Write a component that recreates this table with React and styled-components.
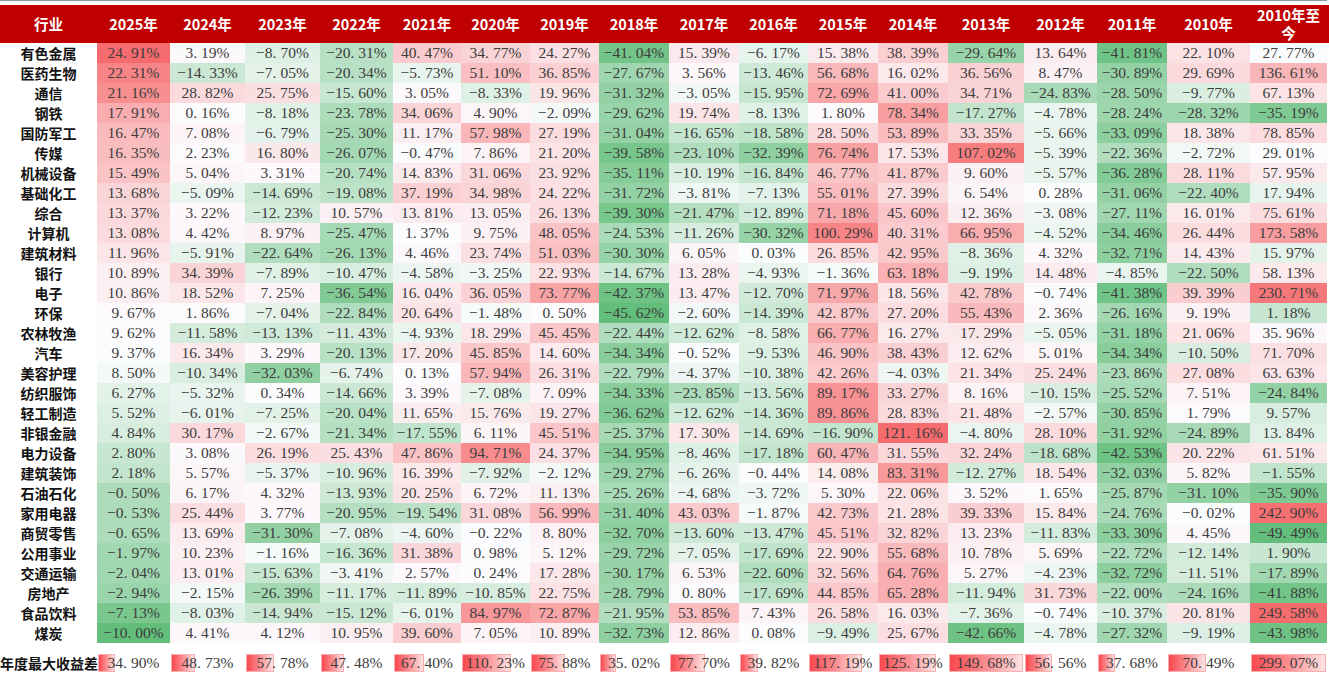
import React from "react";
import styled, { createGlobalStyle } from "styled-components";

const GlobalStyle = createGlobalStyle`
  html, body { margin: 0; padding: 0; background: #ffffff; }
  #root { width: 1329px; }
`;

const WIDTHS = [73, 75, 75, 73, 68, 69, 69, 70, 70, 69, 70, 70, 76, 73, 70, 83, 77];
const GRID = `97px ${WIDTHS.map((w) => w + "px").join(" ")}`;

const HEADERS = [
  "2025年", "2024年", "2023年", "2022年", "2021年", "2020年", "2019年", "2018年",
  "2017年", "2016年", "2015年", "2014年", "2013年", "2012年", "2011年", "2010年", "2010年至今",
];

const ROWS = [
  ["有色金属", [24.91, 3.19, -8.70, -20.31, 40.47, 34.77, 24.27, -41.04, 15.39, -6.17, 15.38, 38.39, -29.64, 13.64, -41.81, 22.10, 27.77]],
  ["医药生物", [22.31, -14.33, -7.05, -20.34, -5.73, 51.10, 36.85, -27.67, 3.56, -13.46, 56.68, 16.02, 36.56, 8.47, -30.89, 29.69, 136.61]],
  ["通信", [21.16, 28.82, 25.75, -15.60, 3.05, -8.33, 19.96, -31.32, -3.05, -15.95, 72.69, 41.00, 34.71, -24.83, -28.50, -9.77, 67.13]],
  ["钢铁", [17.91, 0.16, -8.18, -23.78, 34.06, 4.90, -2.09, -29.62, 19.74, -8.13, 1.80, 78.34, -17.27, -4.78, -28.24, -28.32, -35.19]],
  ["国防军工", [16.47, 7.08, -6.79, -25.30, 11.17, 57.98, 27.19, -31.04, -16.65, -18.58, 28.50, 53.89, 33.35, -5.66, -33.09, 18.38, 78.85]],
  ["传媒", [16.35, 2.23, 16.80, -26.07, -0.47, 7.86, 21.20, -39.58, -23.10, -32.39, 76.74, 17.53, 107.02, -5.39, -22.36, -2.72, 29.01]],
  ["机械设备", [15.49, 5.04, 3.31, -20.74, 14.83, 31.06, 23.92, -35.11, -10.19, -16.84, 46.77, 41.87, 9.60, -5.57, -36.28, 28.11, 57.95]],
  ["基础化工", [13.68, -5.09, -14.69, -19.08, 37.19, 34.98, 24.22, -31.72, -3.81, -7.13, 55.01, 27.39, 6.54, 0.28, -31.06, -22.40, 17.94]],
  ["综合", [13.37, 3.22, -12.23, 10.57, 13.81, 13.05, 26.13, -39.30, -21.47, -12.89, 71.18, 45.60, 12.36, -3.08, -27.11, 16.01, 75.61]],
  ["计算机", [13.08, 4.42, 8.97, -25.47, 1.37, 9.75, 48.05, -24.53, -11.26, -30.32, 100.29, 40.31, 66.95, -4.52, -34.46, 26.44, 173.58]],
  ["建筑材料", [11.96, -5.91, -22.64, -26.13, 4.46, 23.74, 51.03, -30.30, 6.05, 0.03, 26.85, 42.95, -8.36, 4.32, -32.71, 14.43, 15.97]],
  ["银行", [10.89, 34.39, -7.89, -10.47, -4.58, -3.25, 22.93, -14.67, 13.28, -4.93, -1.36, 63.18, -9.19, 14.48, -4.85, -22.50, 58.13]],
  ["电子", [10.86, 18.52, 7.25, -36.54, 16.04, 36.05, 73.77, -42.37, 13.47, -12.70, 71.97, 18.56, 42.78, -0.74, -41.38, 39.39, 230.71]],
  ["环保", [9.67, 1.86, -7.04, -22.84, 20.64, -1.48, 0.50, -45.62, -2.60, -14.39, 42.87, 27.20, 55.43, 2.36, -26.16, 9.19, 1.18]],
  ["农林牧渔", [9.62, -11.58, -13.13, -11.43, -4.93, 18.29, 45.45, -22.44, -12.62, -8.58, 66.77, 16.27, 17.29, -5.05, -31.18, 21.06, 35.96]],
  ["汽车", [9.37, 16.34, 3.29, -20.13, 17.20, 45.85, 14.60, -34.34, -0.52, -9.53, 46.90, 38.43, 12.62, 5.01, -34.34, -10.50, 71.70]],
  ["美容护理", [8.50, -10.34, -32.03, -6.74, 0.13, 57.94, 26.31, -22.79, -4.37, -10.38, 42.26, -4.03, 21.34, 25.24, -23.86, 27.08, 63.63]],
  ["纺织服饰", [6.27, -5.32, 0.34, -14.66, 3.39, -7.08, 7.09, -34.33, -23.85, -13.56, 89.17, 33.27, 8.16, -10.15, -25.52, 7.51, -24.84]],
  ["轻工制造", [5.52, -6.01, -7.25, -20.04, 11.65, 15.76, 19.27, -36.62, -12.62, -14.36, 89.86, 28.83, 21.48, -2.57, -30.85, 1.79, 9.57]],
  ["非银金融", [4.84, 30.17, -2.67, -21.34, -17.55, 6.11, 45.51, -25.37, 17.30, -14.69, -16.90, 121.16, -4.80, 28.10, -31.92, -24.89, 13.84]],
  ["电力设备", [2.80, 3.08, 26.19, 25.43, 47.86, 94.71, 24.37, -34.95, -8.46, -17.18, 60.47, 31.55, 32.24, -18.68, -42.53, 20.22, 61.51]],
  ["建筑装饰", [2.18, 5.57, -5.37, -10.96, 16.39, -7.92, -2.12, -29.27, -6.26, -0.44, 14.08, 83.31, -12.27, 18.54, -32.03, 5.82, -1.55]],
  ["石油石化", [-0.50, 6.17, 4.32, -13.93, 20.25, 6.72, 11.13, -25.26, -4.68, -3.72, 5.30, 22.06, 3.52, 1.65, -25.87, -31.10, -35.90]],
  ["家用电器", [-0.53, 25.44, 3.77, -20.95, -19.54, 31.08, 56.99, -31.40, 43.03, -1.87, 42.73, 21.28, 39.33, 15.84, -24.76, -0.02, 242.90]],
  ["商贸零售", [-0.65, 13.69, -31.30, -7.08, -4.60, -0.22, 8.80, -32.70, -13.60, -13.47, 45.51, 32.82, 13.23, -11.83, -33.30, 4.45, -49.49]],
  ["公用事业", [-1.97, 10.23, -1.16, -16.36, 31.38, 0.98, 5.12, -29.72, -7.05, -17.69, 22.90, 55.68, 10.78, 5.69, -22.72, -12.14, 1.90]],
  ["交通运输", [-2.04, 13.01, -15.63, -3.41, 2.57, 0.24, 17.28, -30.17, 6.53, -22.60, 32.56, 64.76, 5.27, -4.23, -32.72, -11.51, -17.89]],
  ["房地产", [-2.94, -2.15, -26.39, -11.17, -11.89, -10.85, 22.75, -28.79, 0.80, -17.69, 44.85, 65.28, -11.94, 31.73, -22.00, -24.16, -41.88]],
  ["食品饮料", [-7.13, -8.03, -14.94, -15.12, -6.01, 84.97, 72.87, -21.95, 53.85, 7.43, 26.58, 16.03, -7.36, -0.74, -10.37, 20.81, 249.58]],
  ["煤炭", [-10.00, 4.41, 4.12, 10.95, 39.60, 7.05, 10.89, -32.73, 12.86, 0.08, -9.49, 25.67, -42.66, -4.78, -27.32, -9.19, -43.98]],
];

const SPREAD = [34.90, 48.73, 57.78, 47.48, 67.40, 110.23, 75.88, 35.02, 77.70, 39.82, 117.19, 125.19, 149.68, 56.56, 37.68, 70.49, 299.07];

const RED = [246, 108, 110];
const GREEN = [99, 190, 123];
const WHITE = [252, 252, 255];

const mix = (a, b, t) =>
  `rgb(${a.map((c, i) => Math.round(c + (b[i] - c) * t)).join(",")})`;

// colour-scale groups: 2025 alone, 2024-2010 together, 2010年至今 alone
const GROUPS = [[0], Array.from({ length: 15 }, (_, i) => i + 1), [16]];

const statsFor = (cols) => {
  const vals = [];
  cols.forEach((ci) => ROWS.forEach((r) => vals.push(r[1][ci])));
  vals.sort((a, b) => a - b);
  const n = vals.length;
  const k = 0.5 * (n - 1);
  const lo = Math.floor(k);
  const med = vals[lo] + (vals[Math.ceil(k)] - vals[lo]) * (k - lo);
  return { min: vals[0], max: vals[n - 1], med };
};

const STATS = [];
GROUPS.forEach((g) => {
  const s = statsFor(g);
  g.forEach((ci) => {
    STATS[ci] = s;
  });
});

const cellColor = (v, ci) => {
  const { min, max, med } = STATS[ci];
  if (v >= med) return mix(WHITE, RED, (v - med) / (max - med));
  return mix(WHITE, GREEN, (med - v) / (med - min));
};

const SPREAD_MAIN_MAX = Math.max(...SPREAD.slice(0, 16));

const Page = styled.div`
  width: 1329px;
  height: 675px;
  overflow: hidden;
  background: #ffffff;
`;

const TopRule = styled.div`
  height: 1px;
  width: 1327px;
  background: #9a9a9a;
  margin-bottom: 4px;
`;

const Grid = styled.div`
  display: grid;
  grid-template-columns: ${GRID};
`;

const HeaderRow = styled(Grid)`
  height: 38px;
  background: #c00000;
`;

const HeadCell = styled.div`
  display: flex;
  align-items: center;
  justify-content: center;
  text-align: center;
  color: #ffffff;
  font-family: "Noto Sans CJK SC", "Noto Sans", sans-serif;
  font-weight: 700;
  font-size: 14.5px;
  line-height: 18px;
  padding: 0 2px;
`;

const Body = styled(Grid)`
  grid-template-rows: repeat(30, 1fr);
  height: 590px;
`;

const LabelCell = styled.div`
  display: flex;
  align-items: center;
  justify-content: center;
  font-family: "Noto Sans CJK SC", sans-serif;
  font-weight: 700;
  font-size: 14px;
  color: #111111;
  white-space: nowrap;
`;

const DataCell = styled.div.attrs((p) => ({ style: { background: p.$bg } }))`
  display: flex;
  align-items: center;
  justify-content: center;
  font-family: "Liberation Serif", "Times New Roman", serif;
  font-size: 15.5px;
  color: #3c3c3c;
  white-space: nowrap;
`;

const Dot = styled.span`
  padding-right: 4px;
`;

const Spacer = styled.div`
  height: 20px;
`;

const SpreadRow = styled(Grid)`
  height: 18px;
`;

const SpreadLabel = styled.div`
  display: flex;
  align-items: center;
  font-family: "Noto Sans CJK SC", sans-serif;
  font-weight: 700;
  font-size: 14px;
  color: #111111;
  white-space: nowrap;
  overflow: visible;
`;

const SpreadCell = styled.div`
  display: grid;
  align-items: center;
`;

const Bar = styled.div.attrs((p) => ({ style: { width: `${p.$w}px` } }))`
  grid-area: 1 / 1;
  justify-self: start;
  margin-left: 1px;
  height: 18px;
  box-sizing: border-box;
  border: 1px solid #fbaeb0;
  background: linear-gradient(90deg, #f8484e 0%, #fb8f92 50%, #fde3e4 100%);
`;

const SpreadValue = styled.div`
  grid-area: 1 / 1;
  justify-self: center;
  font-family: "Liberation Serif", "Times New Roman", serif;
  font-size: 15.5px;
  color: #3c3c3c;
  white-space: nowrap;
`;

const Num = ({ v }) => {
  const sign = v < 0 ? "\u2212" : "";
  const [int, dec] = Math.abs(v).toFixed(2).split(".");
  return (
    <>
      {sign}
      {int}
      <Dot>.</Dot>
      {dec}%
    </>
  );
};

export default function App() {
  return (
    <>
      <GlobalStyle />
      <Page>
        <TopRule />
        <HeaderRow>
          <HeadCell>行业</HeadCell>
          {HEADERS.map((h) => (
            <HeadCell key={h}>{h}</HeadCell>
          ))}
        </HeaderRow>
        <Body>
          {ROWS.map(([name, vals]) => (
            <React.Fragment key={name}>
              <LabelCell>{name}</LabelCell>
              {vals.map((v, ci) => (
                <DataCell key={ci} $bg={cellColor(v, ci)}>
                  <Num v={v} />
                </DataCell>
              ))}
            </React.Fragment>
          ))}
        </Body>
        <Spacer />
        <SpreadRow>
          <SpreadLabel>年度最大收益差</SpreadLabel>
          {SPREAD.map((v, ci) => {
            const max = ci === 16 ? SPREAD[16] : SPREAD_MAIN_MAX;
            const w = (v / max) * (WIDTHS[ci] - 2);
            return (
              <SpreadCell key={ci}>
                <Bar $w={w} />
                <SpreadValue>
                  <Num v={v} />
                </SpreadValue>
              </SpreadCell>
            );
          })}
        </SpreadRow>
      </Page>
    </>
  );
}
